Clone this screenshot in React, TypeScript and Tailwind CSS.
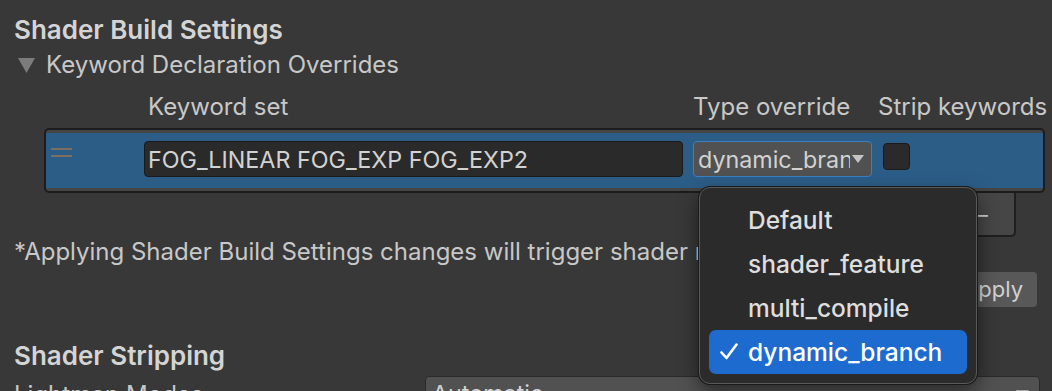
import React from "react";

const OPTIONS = ["Default", "shader_feature", "multi_compile", "dynamic_branch"];
const SELECTED = "dynamic_branch";

function DropArrow({ className }: { className?: string }) {
  return (
    <svg viewBox="0 0 12 8" className={className} fill="currentColor">
      <path d="M0 0 L12 0 L6 8 Z" />
    </svg>
  );
}

function TypeMenu() {
  return (
    <div className="absolute left-[699px] top-[187px] w-[278px] rounded-[11px] border border-[#5a5a5a] bg-[#2b2b2b] px-[9px] pt-[10px] pb-[9px] shadow-[0_0_0_1px_#1a1a1a,0_8px_20px_rgba(0,0,0,0.5)]">
      {OPTIONS.map((opt) => {
        const active = opt === SELECTED;
        return (
          <div
            key={opt}
            className={
              active
                ? "relative flex h-[44px] items-center rounded-[7px] bg-[#1e6bcf] pl-[39px] text-[24.5px] font-medium text-white"
                : "relative flex h-[44px] items-center pl-[39px] text-[24.5px] font-medium text-[#dedede]"
            }
          >
            {active && (
              <svg
                viewBox="0 0 18 17"
                className="absolute left-[11px] top-[13px] h-[17px] w-[18px]"
                fill="none"
                stroke="currentColor"
                strokeWidth="2.6"
                strokeLinecap="round"
                strokeLinejoin="round"
              >
                <path d="M1.5 9.5 L6.5 15 L16.5 1.5" />
              </svg>
            )}
            {opt}
          </div>
        );
      })}
    </div>
  );
}

export default function App() {
  return (
    <div className="relative h-[391px] w-[1052px] overflow-hidden bg-[#383838] font-['Inter',sans-serif] text-[#c8c8c8]">
      <h1 className="pl-[14px] pt-[14px] text-[26px] font-semibold leading-[32px] text-[#d4d4d4]">
        Shader Build Settings
      </h1>

      <div className="mt-[4px] flex h-[30px] items-center pl-[18px] text-[24px] leading-[30px]">
        <svg viewBox="0 0 17 15" className="h-[15px] w-[17px] text-[#7c7c7c]" fill="currentColor">
          <path d="M0 0 L17 0 L8.5 15 Z" />
        </svg>
        <span className="ml-[11px]">Keyword Declaration Overrides</span>
      </div>

      <div className="mt-[12px] flex pl-[148px] text-[24px] leading-[30px]">
        <span className="w-[545px]">Keyword set</span>
        <span className="w-[185px]">Type override</span>
        <span className="whitespace-nowrap">Strip keywords</span>
      </div>

      <div className="ml-[44px] mt-[6px] w-[1001px] rounded-[5px] border-2 border-[#1c1c1c] bg-[#454545] py-[3px]">
        <div className="flex h-[55px] items-start bg-[#2c5d87] pt-[8px]">
          <div className="ml-[5px] mt-[7px] flex w-[21px] flex-col gap-[5px]">
            <div className="h-[2px] bg-[#7b6f62]" />
            <div className="h-[2px] bg-[#7b6f62]" />
          </div>
          <div className="ml-[72px] flex h-[36px] w-[539px] items-center overflow-hidden rounded-[4px] border border-[#1a1a1a] bg-[#2a2a2a] pl-[3px] pt-[2px] text-[23.3px] whitespace-nowrap text-[#d2d2d2]">
            FOG_LINEAR FOG_EXP FOG_EXP2
          </div>
          <div className="ml-[10px] flex h-[36px] w-[179px] items-center rounded-[4px] border-[1.5px] border-[#3b7fc4] bg-[#515151] pl-[4px] pr-[7px] text-[23.3px] text-[#d2d2d2]">
            <span className="flex-1 overflow-hidden whitespace-nowrap pt-[2px]">dynamic_branch</span>
            <DropArrow className="ml-[2px] h-[8px] w-[12px] text-[#c4c4c4]" />
          </div>
          <div className="ml-[11px] mt-[2px] h-[27px] w-[27px] rounded-[4px] border border-[#1a1a1a] bg-[#2a2a2a]" />
        </div>
      </div>

      <div className="ml-auto mr-[36px] flex h-[44px] w-[84px] items-center justify-end gap-[12px] rounded-b-[5px] border-2 border-t-0 border-[#1f1f1f] bg-[#464646] pr-[24px] text-[22px] text-[#cfcfcf]">
        <span>+</span>
        <span>−</span>
      </div>

      <p className="pl-[14px] text-[24px] leading-[30px] whitespace-nowrap">
        *Applying Shader Build Settings changes will trigger shader recompilation.
      </p>

      <div className="mt-[5px] flex justify-end pr-[15px]">
        <button className="h-[35px] rounded-[4px] bg-[#585858] px-[14px] text-[22px] text-[#d2d2d2]">
          Apply
        </button>
      </div>

      <h2 className="mt-[33px] pl-[14px] text-[26px] font-semibold leading-[32px] text-[#d4d4d4]">
        Shader Stripping
      </h2>

      <div className="mt-[4px] flex items-start pl-[14px]">
        <span className="w-[411px] pt-[4px] text-[24px] leading-[30px]">Lightmap Modes</span>
        <div className="flex h-[36px] w-[615px] items-center rounded-[4px] border border-[#2a2a2a] bg-[#515151] pl-[6px] pr-[10px] text-[23.3px] text-[#d2d2d2]">
          <span className="flex-1">Automatic</span>
          <DropArrow className="h-[9px] w-[13px] text-[#c4c4c4]" />
        </div>
      </div>

      <TypeMenu />
    </div>
  );
}
